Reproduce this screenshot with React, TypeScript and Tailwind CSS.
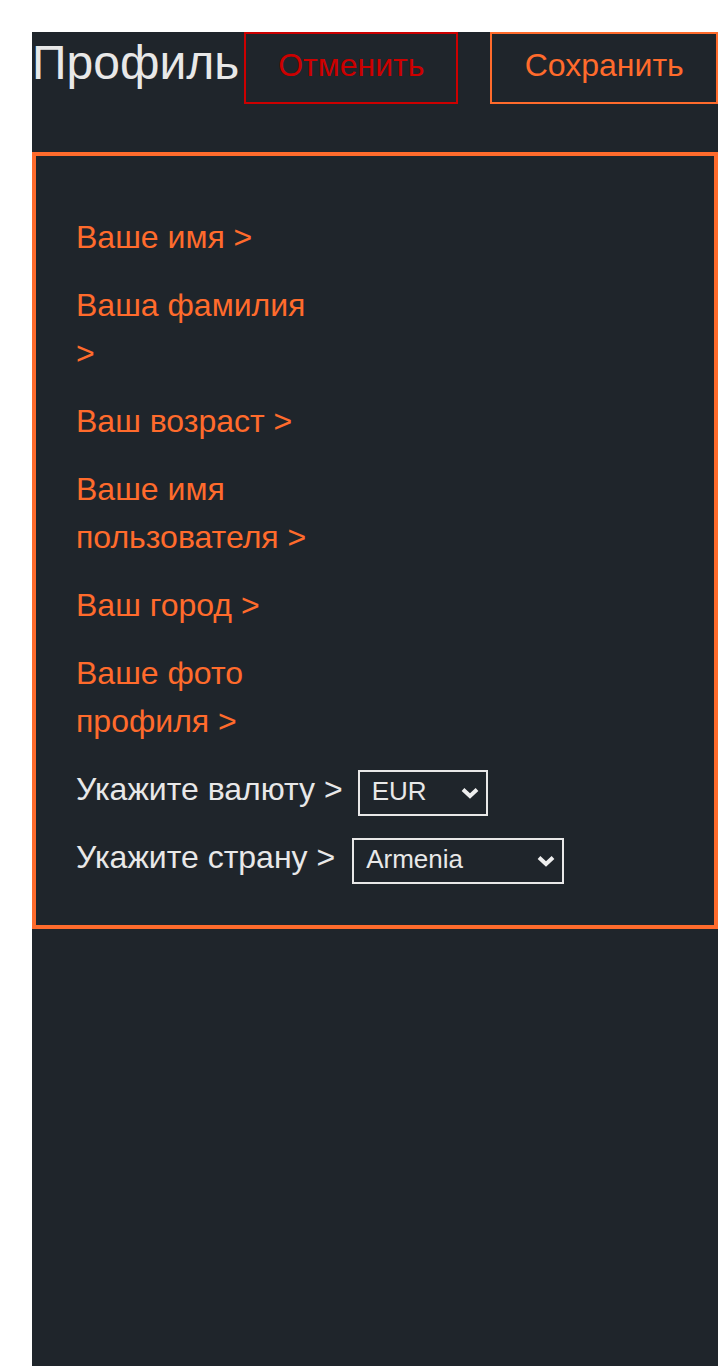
import React from "react";

const ORANGE = "text-[#ff6b2c]";

function Chevron() {
  return (
    <svg
      width="18"
      height="12"
      viewBox="0 0 18 12"
      className="pointer-events-none absolute right-[9px] top-1/2 -translate-y-1/2"
    >
      <path d="M2 2.5 L9 9 L16 2.5" fill="none" stroke="#eeeeee" strokeWidth="4" strokeLinejoin="miter" />
    </svg>
  );
}

function Select({ value, options, width }: { value: string; options: string[]; width: string }) {
  return (
    <span className={`relative inline-block ${width}`}>
      <select
        defaultValue={value}
        className="block h-[46px] w-full appearance-none border-2 border-[#e8e8e8] bg-[#1f252b] pb-1 pl-3 pr-8 text-[26px] leading-[normal] text-[#e8e8e8] outline-none"
      >
        {options.map((o) => (
          <option key={o} value={o}>
            {o}
          </option>
        ))}
      </select>
      <Chevron />
    </span>
  );
}

export default function App() {
  const items: string[] = [
    "Ваше имя >",
    "Ваша фамилия >",
    "Ваш возраст >",
    "Ваше имя пользователя >",
    "Ваш город >",
    "Ваше фото профиля >",
  ];
  return (
    <div
      className="bg-white pl-[32px] pt-[32px]"
      style={{ fontFamily: "'Liberation Sans', Arial, sans-serif" }}
    >
      <div className="min-h-[1334px] w-[686px] bg-[#1f252b]">
        <header className="flex items-start">
          <h1 className="mt-[3px] text-[48px] leading-[normal] text-[#e8e8e8]">Профиль</h1>
          <button className="ml-[5px] h-[72px] border-2 border-[#cc0000] px-8 pb-[6px] text-[32px] text-[#cc0000]">
            Отменить
          </button>
          <button className="ml-8 h-[72px] flex-1 border-2 border-[#ff6b2c] pb-[6px] text-[32px] text-[#ff6b2c]">
            Сохранить
          </button>
        </header>

        <section className="mt-[48px] border-4 border-[#ff6b2c] px-10 pb-[41px] pt-[57px]">
          <div className="flex flex-col gap-5">
            {items.map((t) => (
              <div key={t} className={`w-[240px] text-[32px] leading-[48px] ${ORANGE}`}>
                {t}
              </div>
            ))}
            <div className="flex h-[48px] items-baseline text-[32px] leading-[48px] text-[#e8e8e8]">
              <span>Укажите валюту &gt;</span>
              <span className="ml-[15px]">
                <Select value="EUR" options={["EUR", "USD", "RUB", "AMD"]} width="w-[130px]" />
              </span>
            </div>
            <div className="flex items-baseline text-[32px] leading-[48px] text-[#e8e8e8]">
              <span>Укажите страну &gt;</span>
              <span className="ml-[17px]">
                <Select value="Armenia" options={["Armenia", "Russia", "Georgia"]} width="w-[212px]" />
              </span>
            </div>
          </div>
        </section>
      </div>
    </div>
  );
}
